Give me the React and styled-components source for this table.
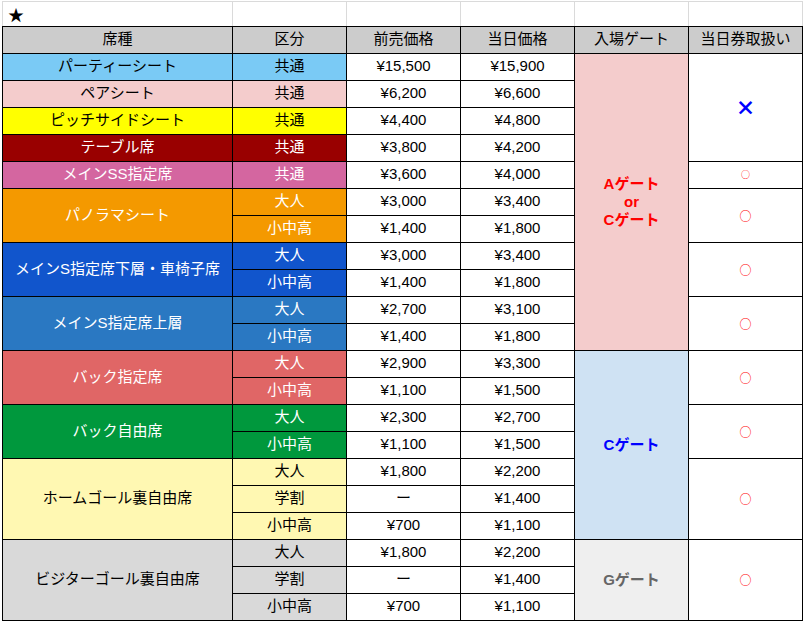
import React from "react";
import styled, { createGlobalStyle } from "styled-components";

const GlobalStyle = createGlobalStyle`
  html, body {
    margin: 0;
    padding: 0;
    background: #fff;
  }
  body {
    font-family: "Liberation Sans", "Noto Sans CJK JP", sans-serif;
    color: #000;
  }
`;

const seats = [
  { name: "パーティーシート", bg: "#7acaf5", fg: "#000", rows: [["共通", "¥15,500", "¥15,900"]] },
  { name: "ペアシート", bg: "#f4cccc", fg: "#000", rows: [["共通", "¥6,200", "¥6,600"]] },
  { name: "ピッチサイドシート", bg: "#ffff00", fg: "#000", rows: [["共通", "¥4,400", "¥4,800"]] },
  { name: "テーブル席", bg: "#990000", fg: "#fff", rows: [["共通", "¥3,800", "¥4,200"]] },
  { name: "メインSS指定席", bg: "#d466a0", fg: "#fff", rows: [["共通", "¥3,600", "¥4,000"]] },
  {
    name: "パノラマシート",
    bg: "#f49900",
    fg: "#fff",
    rows: [
      ["大人", "¥3,000", "¥3,400"],
      ["小中高", "¥1,400", "¥1,800"],
    ],
  },
  {
    name: "メインS指定席下層・車椅子席",
    bg: "#1155cc",
    fg: "#fff",
    rows: [
      ["大人", "¥3,000", "¥3,400"],
      ["小中高", "¥1,400", "¥1,800"],
    ],
  },
  {
    name: "メインS指定席上層",
    bg: "#2a78c2",
    fg: "#fff",
    rows: [
      ["大人", "¥2,700", "¥3,100"],
      ["小中高", "¥1,400", "¥1,800"],
    ],
  },
  {
    name: "バック指定席",
    bg: "#e06666",
    fg: "#fff",
    rows: [
      ["大人", "¥2,900", "¥3,300"],
      ["小中高", "¥1,100", "¥1,500"],
    ],
  },
  {
    name: "バック自由席",
    bg: "#00983d",
    fg: "#fff",
    rows: [
      ["大人", "¥2,300", "¥2,700"],
      ["小中高", "¥1,100", "¥1,500"],
    ],
  },
  {
    name: "ホームゴール裏自由席",
    bg: "#fff8b2",
    fg: "#000",
    rows: [
      ["大人", "¥1,800", "¥2,200"],
      ["学割", "ー", "¥1,400"],
      ["小中高", "¥700", "¥1,100"],
    ],
  },
  {
    name: "ビジターゴール裏自由席",
    bg: "#d9d9d9",
    fg: "#000",
    rows: [
      ["大人", "¥1,800", "¥2,200"],
      ["学割", "ー", "¥1,400"],
      ["小中高", "¥700", "¥1,100"],
    ],
  },
];

const gates = [
  { start: 0, span: 11, bg: "#f4cccc", fg: "#ff0000", lines: ["Aゲート", "or", "Cゲート"] },
  { start: 11, span: 7, bg: "#cfe2f3", fg: "#0000ff", lines: ["Cゲート"] },
  { start: 18, span: 3, bg: "#efefef", fg: "#666666", lines: ["Gゲート"] },
];

const sameDay = [
  { start: 0, span: 4, mark: "×" },
  { start: 4, span: 1, mark: "○", small: true },
  { start: 5, span: 2, mark: "○" },
  { start: 7, span: 2, mark: "○" },
  { start: 9, span: 2, mark: "○" },
  { start: 11, span: 2, mark: "○" },
  { start: 13, span: 2, mark: "○" },
  { start: 15, span: 3, mark: "○" },
  { start: 18, span: 3, mark: "○" },
];

const headers = ["席種", "区分", "前売価格", "当日価格", "入場ゲート", "当日券取扱い"];

const App = () => {
  const cells = [];
  let index = 0;

  seats.forEach((seat, s) => {
    seat.rows.forEach((row, r) => {
      if (r === 0) {
        cells.push(
          <Cell key={`seat-${s}`} $span={seat.rows.length} $bg={seat.bg} $fg={seat.fg}>
            {seat.name}
          </Cell>
        );
      }
      cells.push(
        <Cell key={`cat-${index}`} $bg={seat.bg} $fg={seat.fg}>
          {row[0]}
        </Cell>
      );
      cells.push(<Cell key={`pre-${index}`}>{row[1]}</Cell>);
      cells.push(<Cell key={`day-${index}`}>{row[2]}</Cell>);

      const gate = gates.find((g) => g.start === index);
      if (gate) {
        cells.push(
          <GateCell key={`gate-${index}`} $span={gate.span} $bg={gate.bg} $fg={gate.fg}>
            {gate.lines.map((line) => (
              <div key={line}>{line}</div>
            ))}
          </GateCell>
        );
      }

      const mark = sameDay.find((m) => m.start === index);
      if (mark) {
        cells.push(
          <MarkCell key={`mark-${index}`} $span={mark.span}>
            {mark.mark === "×" ? <Cross>×</Cross> : <Circle $small={mark.small}>○</Circle>}
          </MarkCell>
        );
      }
      index += 1;
    });
  });

  return (
    <>
      <GlobalStyle />
      <Page>
        <StarRow>
          <StarCell>★</StarCell>
          {[0, 1, 2, 3, 4].map((i) => (
            <BlankCell key={i} />
          ))}
        </StarRow>
        <Sheet>
          {headers.map((h) => (
            <HeaderCell key={h}>{h}</HeaderCell>
          ))}
          {cells}
        </Sheet>
      </Page>
    </>
  );
};

export default App;

const Page = styled.div`
  width: 805px;
  padding-top: 1px;
`;

const StarRow = styled.div`
  border-top: 1px solid #dadada;
  display: grid;
  grid-template-columns: 229px repeat(5, 113px);
  grid-auto-rows: 24px;
  gap: 1px;
  padding: 0 1px;
  margin-left: 2px;
  width: max-content;
  background: #dadada;
`;

const BlankCell = styled.div`
  background: #fff;
`;

const StarCell = styled.div`
  background: #fff;
  display: flex;
  align-items: center;
  padding-left: 5px;
  font-family: "Noto Sans CJK JP", sans-serif;
  font-size: 16px;
`;

const Sheet = styled.div`
  display: grid;
  grid-template-columns: 229px repeat(5, 113px);
  grid-auto-rows: 26px;
  gap: 1px;
  padding: 1px;
  margin-left: 2px;
  width: max-content;
  background: #000;
`;

const Cell = styled.div`
  grid-row: span ${(p) => p.$span || 1};
  background: ${(p) => p.$bg || "#fff"};
  color: ${(p) => p.$fg || "#000"};
  display: flex;
  align-items: center;
  justify-content: center;
  text-align: center;
  font-size: 15px;
  line-height: 18px;
  padding-bottom: 2px;
  white-space: nowrap;
`;

const HeaderCell = styled(Cell)`
  background: #cccccc;
`;

const GateCell = styled(Cell)`
  flex-direction: column;
  font-weight: bold;
  padding-bottom: 1px;
`;

const MarkCell = styled(Cell)`
  padding-bottom: 0;
`;

const Cross = styled.span`
  font-family: "Noto Sans CJK JP", sans-serif;
  font-weight: 900;
  font-size: 20px;
  color: #0000ff;
`;

const Circle = styled.span`
  font-family: "Noto Sans CJK JP", sans-serif;
  font-size: ${(p) => (p.$small ? "9px" : "12px")};
  color: #ff0000;
`;
